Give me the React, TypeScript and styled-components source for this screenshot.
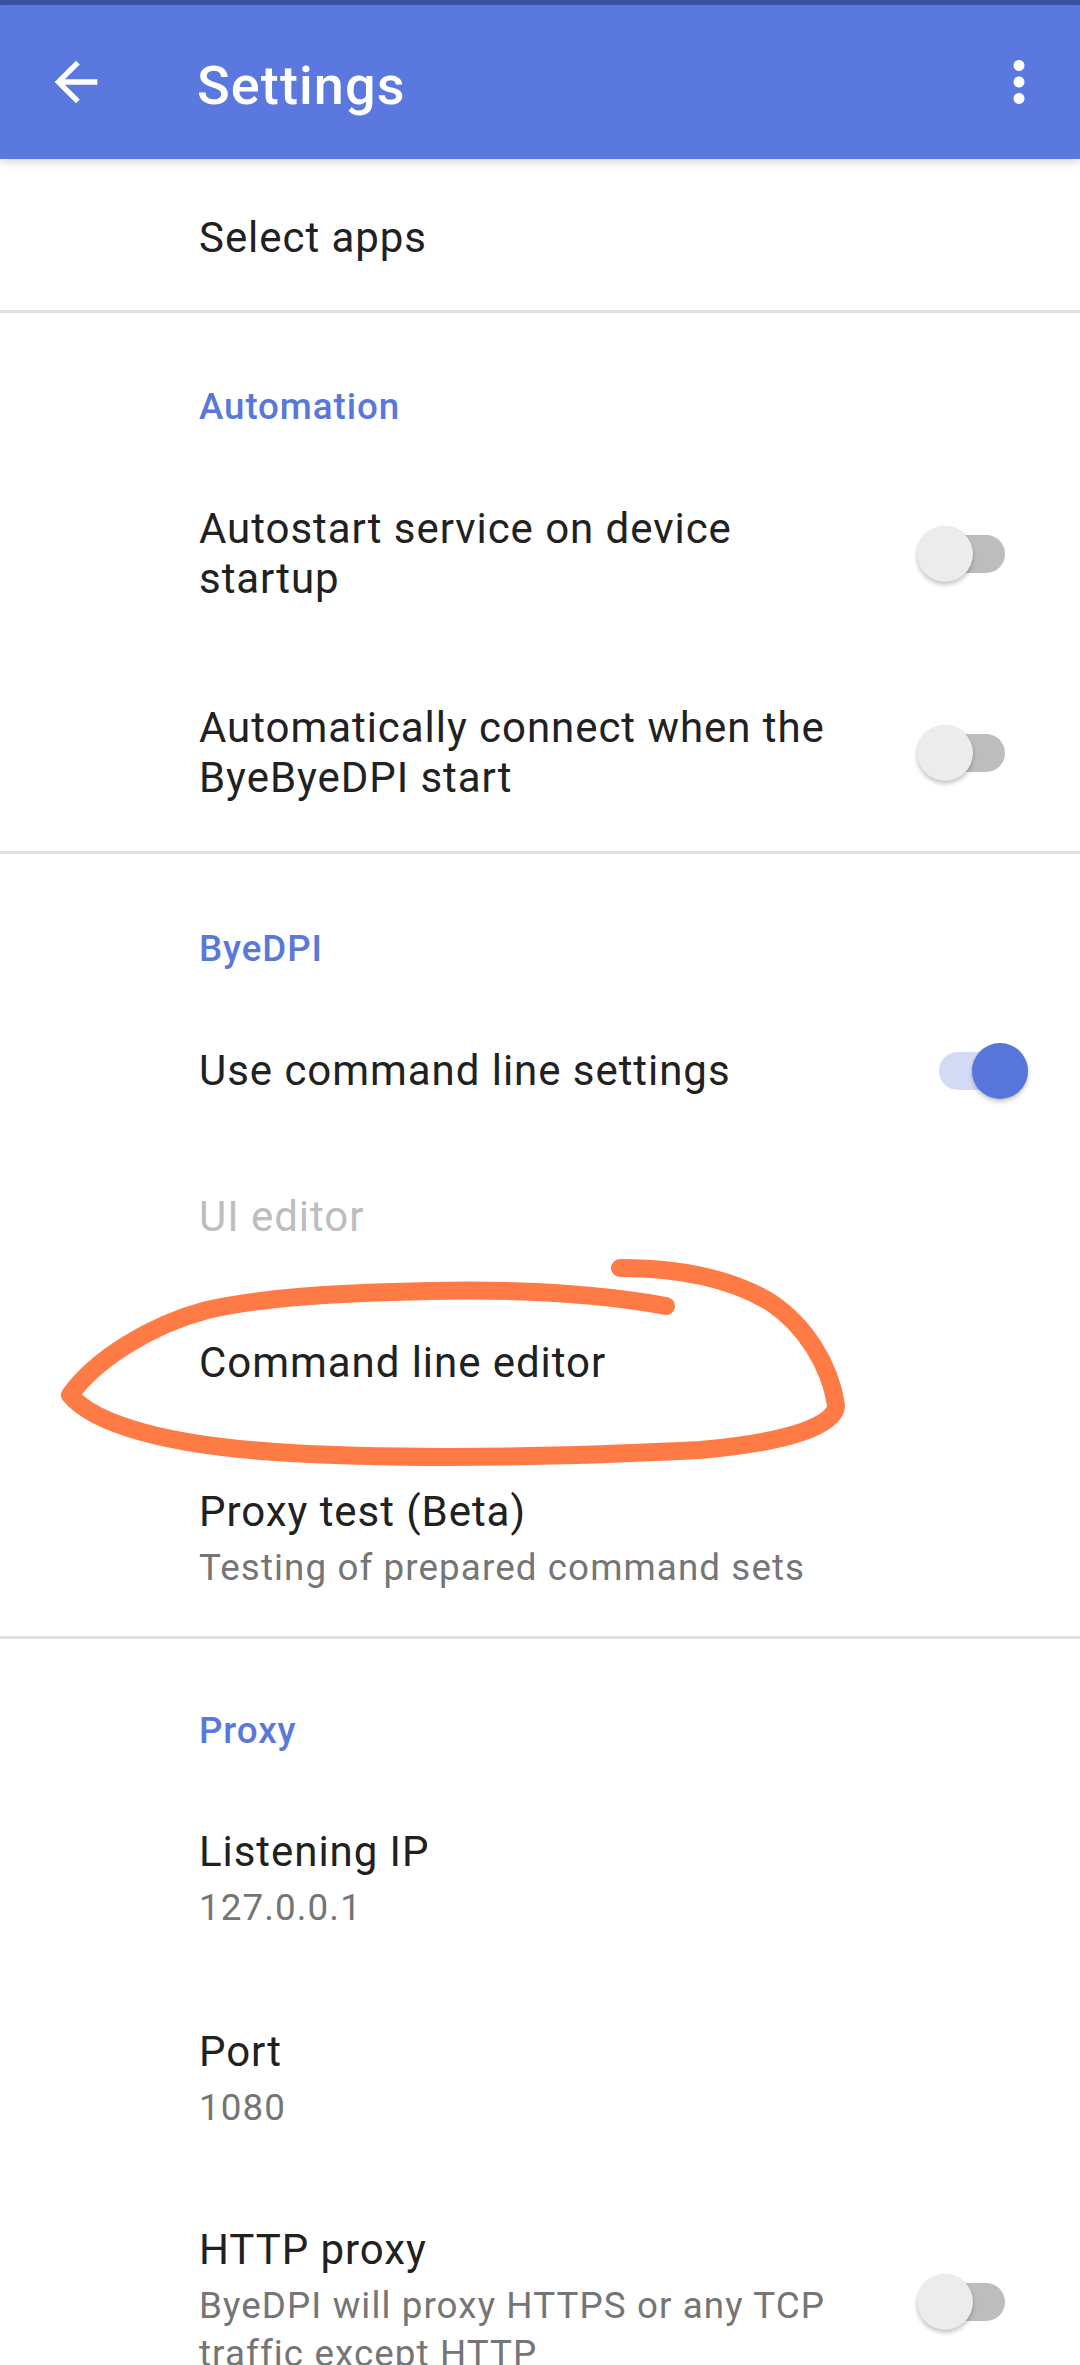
import React from "react";
import styled, { createGlobalStyle } from "styled-components";

const GlobalStyle = createGlobalStyle`
  html, body { margin: 0; padding: 0; background: #ffffff; }
  body { font-family: Roboto, "Noto Sans", "Liberation Sans", sans-serif; -webkit-font-smoothing: antialiased; }
  * { box-sizing: border-box; }
`;

const Page = styled.div`
  position: relative;
  width: 1080px;
  height: 2365px;
  overflow: hidden;
  background: #ffffff;
`;

const StatusStrip = styled.div`
  height: 5px;
  background: #3b53a6;
`;

const Toolbar = styled.header`
  position: relative;
  z-index: 1;
  height: 154px;
  display: flex;
  align-items: center;
  padding: 0 28px 0 44px;
  background: #5a78dd;
  box-shadow: 0 3px 9px rgba(0, 0, 0, 0.16);
`;

const ToolbarTitle = styled.h1`
  margin: 0 0 0 89px;
  padding-top: 7px;
  font-size: 54px;
  font-weight: 500;
  letter-spacing: 1.1px;
  color: #ffffff;
  line-height: normal;
  flex: 1;
`;

const IconButton = styled.span<{ $size: number }>`
  display: flex;
  width: ${(p) => p.$size}px;
  height: ${(p) => p.$size}px;
  svg { width: 100%; height: 100%; display: block; }
`;

const List = styled.main`
  display: flex;
  flex-direction: column;
`;

const Divider = styled.div`
  height: 3px;
  background: #e0e0e0;
`;

const CategoryTitle = styled.div<{ $pt: number }>`
  padding: ${(p) => p.$pt}px 42px 23px 199px;
  font-size: 36.75px;
  line-height: 44px;
  font-weight: 500;
  letter-spacing: 0.9px;
  color: #5a78d9;
`;

const Row = styled.div<{ $pt: number; $pb: number }>`
  display: flex;
  align-items: center;
  padding: ${(p) => p.$pt}px 42px ${(p) => p.$pb}px 199px;
`;

const RowText = styled.div<{ $withSwitch?: boolean }>`
  flex: 1;
  min-width: 0;
  margin-right: ${(p) => (p.$withSwitch ? 54 : 0)}px;
  display: flex;
  flex-direction: column;
`;

const Title = styled.div<{ $disabled?: boolean }>`
  font-size: 42px;
  line-height: 50px;
  letter-spacing: 0.95px;
  color: ${(p) => (p.$disabled ? "#bdbdbd" : "#212121")};
`;

const Summary = styled.div`
  margin-top: 7px;
  font-size: 36.75px;
  line-height: 48px;
  letter-spacing: 1.1px;
  color: #757575;
`;

const SwitchBox = styled.div`
  position: relative;
  flex: none;
  width: 124px;
  height: 50px;
  display: flex;
  align-items: center;
`;

const Track = styled.div<{ $on: boolean }>`
  margin-left: 25px;
  width: 66px;
  height: 38px;
  border-radius: 19px;
  background: ${(p) => (p.$on ? "#d2daf6" : "#bdbdbd")};
`;

const Thumb = styled.div<{ $on: boolean }>`
  position: absolute;
  top: -3px;
  left: ${(p) => (p.$on ? 58 : 3)}px;
  width: 56px;
  height: 56px;
  border-radius: 50%;
  background: ${(p) => (p.$on ? "#5775da" : "#ececec")};
  box-shadow: 0 3px 4px rgba(0, 0, 0, 0.22), 0 0 1px rgba(0, 0, 0, 0.12);
`;

const Annotation = styled.svg`
  position: absolute;
  top: 0;
  left: 0;
  width: 1080px;
  height: 2365px;
  pointer-events: none;
  z-index: 2;
`;

function Switch({ on }: { on: boolean }) {
  return (
    <SwitchBox>
      <Track $on={on} />
      <Thumb $on={on} />
    </SwitchBox>
  );
}

type Pref = {
  title: string;
  summary?: string;
  toggle?: boolean;
  disabled?: boolean;
  pt: number;
  pb: number;
};

function Preference({ title, summary, toggle, disabled, pt, pb }: Pref) {
  const hasSwitch = toggle !== undefined;
  return (
    <Row $pt={pt} $pb={pb}>
      <RowText $withSwitch={hasSwitch}>
        <Title $disabled={disabled}>{title}</Title>
        {summary && <Summary>{summary}</Summary>}
      </RowText>
      {hasSwitch && <Switch on={!!toggle} />}
    </Row>
  );
}

export default function App() {
  return (
    <Page>
      <GlobalStyle />
      <StatusStrip />
      <Toolbar>
        <IconButton $size={64}>
          <svg viewBox="0 0 24 24">
            <path fill="#ffffff" d="M20 11H7.83l5.59-5.59L12 4l-8 8 8 8 1.41-1.41L7.83 13H20v-2z" />
          </svg>
        </IconButton>
        <ToolbarTitle>Settings</ToolbarTitle>
        <IconButton $size={66}>
          <svg viewBox="0 0 24 24">
            <path
              fill="#ffffff"
              d="M12 8c1.1 0 2-.9 2-2s-.9-2-2-2-2 .9-2 2 .9 2 2 2zm0 2c-1.1 0-2 .9-2 2s.9 2 2 2 2-.9 2-2-.9-2-2-2zm0 6c-1.1 0-2 .9-2 2s.9 2 2 2 2-.9 2-2-.9-2-2-2z"
            />
          </svg>
        </IconButton>
      </Toolbar>

      <List>
        <Preference title="Select apps" pt={54} pb={47} />
        <Divider />

        <CategoryTitle $pt={72}>Automation</CategoryTitle>
        <Preference title="Autostart service on device startup" toggle={false} pt={52} pb={47} />
        <Preference title="Automatically connect when the ByeByeDPI start" toggle={false} pt={52} pb={48} />
        <Divider />

        <CategoryTitle $pt={73}>ByeDPI</CategoryTitle>
        <Preference title="Use command line settings" toggle={true} pt={52} pb={46} />
        <Preference title="UI editor" disabled pt={50} pb={46} />
        <Preference title="Command line editor" pt={50} pb={48} />
        <Preference title="Proxy test (Beta)" summary="Testing of prepared command sets" pt={51} pb={44} />
        <Divider />

        <CategoryTitle $pt={70}>Proxy</CategoryTitle>
        <Preference title="Listening IP" summary="127.0.0.1" pt={51} pb={44} />
        <Preference title="Port" summary="1080" pt={51} pb={42} />
        <Preference
          title="HTTP proxy"
          summary="ByeDPI will proxy HTTPS or any TCP traffic except HTTP"
          toggle={false}
          pt={51}
          pb={44}
        />
      </List>

      <Annotation viewBox="0 0 1080 2365">
        <path
          d="M 666 1306
             C 600 1294, 520 1289, 430 1291
             C 330 1293, 260 1298, 207 1310
             C 150 1325, 95 1360, 70 1395
             C 95 1425, 170 1445, 275 1452
             C 400 1460, 560 1457, 700 1450
             C 790 1442, 836 1425, 836 1405
             C 830 1365, 805 1325, 770 1302
             C 730 1278, 680 1268, 620 1268"
          fill="none"
          stroke="#ff7b45"
          strokeWidth={18}
          strokeLinecap="round"
          strokeLinejoin="round"
        />
      </Annotation>
    </Page>
  );
}
